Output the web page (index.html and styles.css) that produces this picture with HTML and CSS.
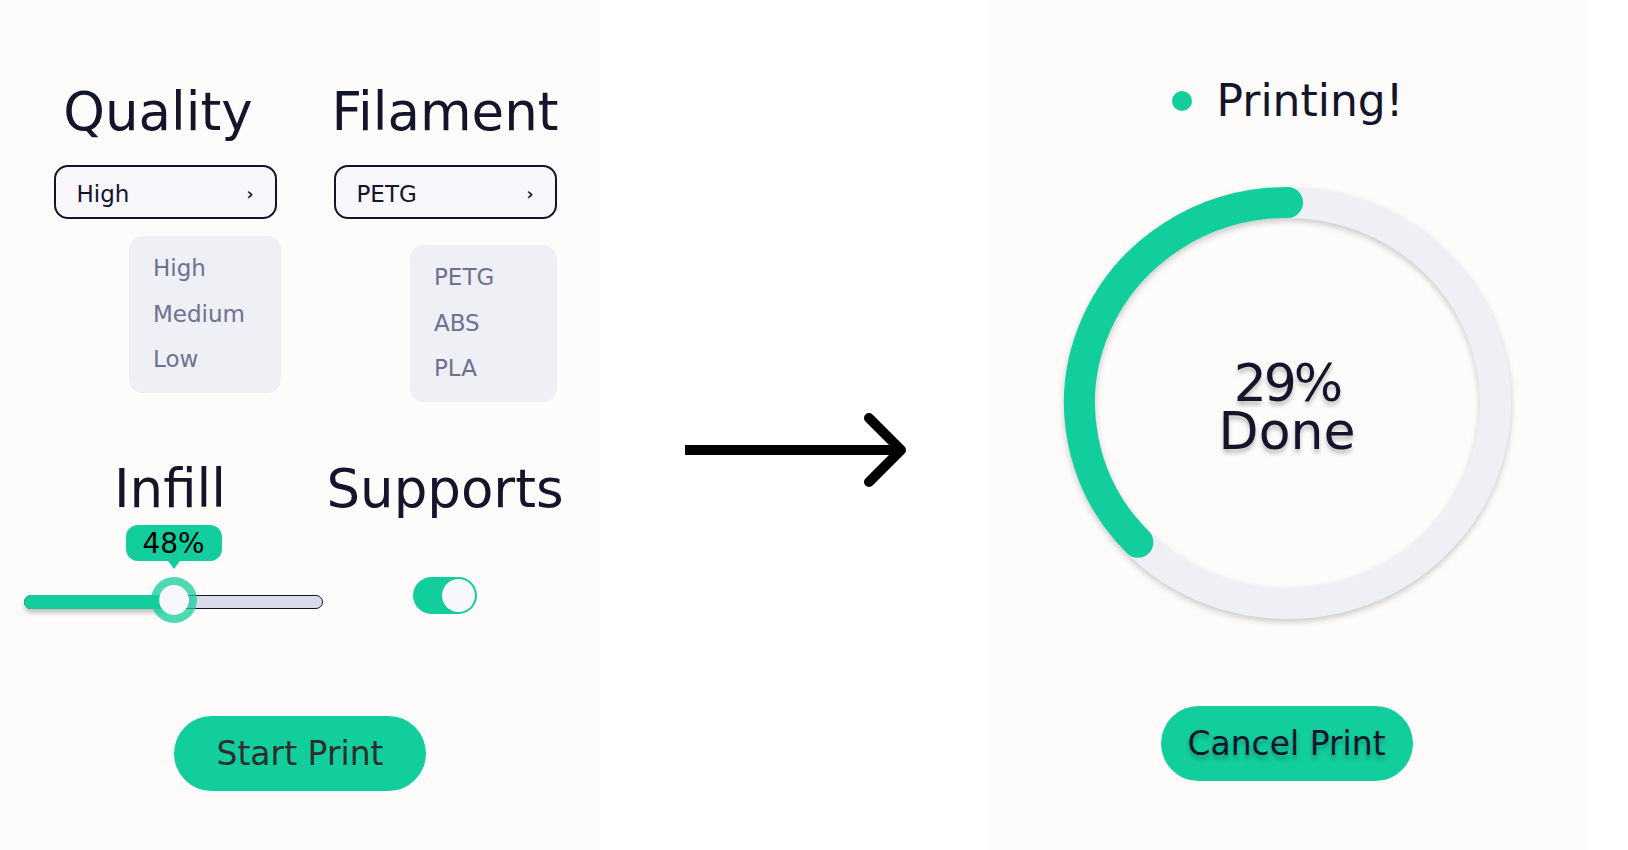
FILE: index.html
```html
<!DOCTYPE html>
<html lang="en">
<head>
<meta charset="utf-8">
<title>Print</title>
<link rel="stylesheet" href="styles.css">
</head>
<body>
<main class="page">
  <section class="panel settings">
    <div class="grid">
      <div class="field">
        <h2 class="heading heading-quality">Quality</h2>
        <div class="select"><span>High</span><span class="chev">›</span></div>
        <ul class="menu menu-quality"><li>High</li><li>Medium</li><li>Low</li></ul>
      </div>
      <div class="field">
        <h2 class="heading">Filament</h2>
        <div class="select"><span>PETG</span><span class="chev">›</span></div>
        <ul class="menu menu-filament"><li>PETG</li><li>ABS</li><li>PLA</li></ul>
      </div>
      <div class="field">
        <h2 class="heading heading-infill">Infill</h2>
        <div class="slider" style="--pos: 50%">
          <div class="tip">48%</div>
          <div class="track"><div class="fill"></div></div>
          <div class="thumb"></div>
        </div>
      </div>
      <div class="field">
        <h2 class="heading">Supports</h2>
        <div class="toggle"><span class="knob"></span></div>
      </div>
    </div>
    <button class="btn btn-start">Start Print</button>
  </section>

  <div class="divider">
    <svg class="arrow" width="226" height="80" viewBox="0 0 226 80">
      <path d="M0 40 H214" stroke="#000" stroke-width="10" fill="none"/>
      <path d="M184 8 L216 40 L184 72" stroke="#000" stroke-width="10" fill="none" stroke-linecap="round" stroke-linejoin="round"/>
    </svg>
  </div>

  <section class="panel status">
    <div class="state"><span class="dot"></span><span class="state-text">Printing!</span></div>
    <div class="ring">
      <svg class="ring-svg" width="447" height="432" viewBox="0 0 447 432">
        <ellipse cx="223.5" cy="216" rx="208" ry="200.5" fill="none" stroke="#eff0f6" stroke-width="31"/>
        <path d="M223.5 15.5 A208 200.5 0 0 0 73.9 355.3" fill="none" stroke="#12ce9c" stroke-width="31" stroke-linecap="round"/>
      </svg>
      <div class="ring-text"><span class="pct">29%</span><span class="done">Done</span></div>
    </div>
    <button class="btn btn-cancel">Cancel Print</button>
  </section>
</main>
</body>
</html>
```

FILE: styles.css
```css
* { box-sizing: border-box; }

html, body {
  margin: 0;
  padding: 0;
  background: #ffffff;
}

body {
  font-family: "DejaVu Sans", "Noto Sans", sans-serif;
  color: #14142b;
}

.page {
  display: flex;
  width: 1628px;
  height: 850px;
}

.panel {
  background: #fdfcfb;
  height: 850px;
  display: flex;
  flex-direction: column;
}

.settings {
  width: 600px;
  padding-top: 85px;
}

.grid {
  margin-left: 40px;
  display: grid;
  grid-template-columns: 250px 250px;
  column-gap: 30px;
  row-gap: 60px;
}

.field {
  display: flex;
  flex-direction: column;
  align-items: center;
}

.heading {
  margin: 0;
  font-size: 53px;
  line-height: 53px;
  font-weight: 400;
  color: #14142b;
  white-space: nowrap;
}

.heading-quality { margin-right: 14px; }
.heading-infill { margin-left: 10px; }

.select {
  margin-top: 27px;
  width: 223px;
  height: 54px;
  border: 2px solid #14142b;
  border-radius: 14px;
  background: #f7f7fc;
  display: flex;
  align-items: center;
  justify-content: space-between;
  padding: 3px 21px 0 21px;
  font-size: 23px;
  color: #14142b;
}

.chev {
  font-size: 17px;
  font-weight: 700;
}

.menu {
  list-style: none;
  margin: 0;
  padding: 10px 0 10px 24px;
  background: #eff0f6;
  border-radius: 14px;
  align-self: flex-end;
  font-size: 23px;
  line-height: 45.5px;
  color: #6e7191;
}

.menu-quality {
  width: 152px;
  margin-top: 17px;
  margin-right: 9px;
}

.menu-filament {
  width: 147px;
  margin-top: 26px;
  margin-right: 13px;
}

/* slider */
.slider {
  position: relative;
  align-self: flex-start;
  margin-left: -16px;
  margin-top: 10px;
  width: 299px;
  padding-top: 70px;
}

.tip {
  position: absolute;
  top: 0;
  left: var(--pos);
  transform: translateX(-50%);
  width: 96px;
  height: 36px;
  border-radius: 12px;
  background: #12ce9c;
  color: #000;
  font-size: 28px;
  line-height: 37px;
  text-align: center;
}

.tip::after {
  content: "";
  position: absolute;
  left: 50%;
  bottom: -8px;
  margin-left: -6px;
  border-left: 6px solid transparent;
  border-right: 6px solid transparent;
  border-top: 8px solid #12ce9c;
}

.track {
  position: relative;
  height: 14px;
  border-radius: 7px;
  background: #d9dbe9;
  border: 1px solid #14142b;
}

.fill {
  position: absolute;
  left: -1px;
  top: -1px;
  height: 14px;
  width: var(--pos);
  border-radius: 7px;
  background: #12ce9c;
  box-shadow: 0 4px 4px rgba(0, 0, 0, 0.22);
}

.thumb {
  position: absolute;
  top: 52px;
  left: var(--pos);
  transform: translateX(-50%);
  width: 46px;
  height: 46px;
  border-radius: 50%;
  background: #f7f7fc;
  border: 8px solid rgba(18, 206, 156, 0.75);
  background-clip: padding-box;
}

/* toggle */
.toggle {
  margin-top: 62px;
  width: 64px;
  height: 37px;
  border-radius: 19px;
  background: #12ce9c;
  padding: 2px;
  display: flex;
  justify-content: flex-end;
}

.knob {
  width: 33px;
  height: 33px;
  border-radius: 50%;
  background: #f7f7fc;
}

/* buttons */
.btn {
  width: 252px;
  height: 75px;
  border: none;
  border-radius: 38px;
  background: #12ce9c;
  font-family: "DejaVu Sans", "Noto Sans", sans-serif;
  font-size: 33px;
  padding: 0;
  align-self: center;
}

.btn-start {
  margin-top: 102px;
  color: #2e2e2e;
}

.btn-cancel {
  margin-top: 87px;
  color: #14142b;
  text-shadow: 0 4px 4px rgba(0, 0, 0, 0.25);
}

/* divider arrow */
.divider {
  width: 386px;
  padding-top: 410px;
  padding-left: 85px;
}

.arrow { display: block; }

/* status panel */
.status {
  width: 601px;
  padding-top: 79px;
  align-items: center;
}

.state {
  display: flex;
  align-items: center;
  gap: 25px;
  margin-left: 2px;
}

.dot {
  width: 20px;
  height: 20px;
  border-radius: 50%;
  background: #12ce9c;
}

.state-text {
  font-size: 44px;
  line-height: 44px;
  color: #14142b;
}

.ring {
  margin-top: 64px;
  display: grid;
  margin-left: 1px;
}

.ring-svg {
  grid-area: 1 / 1;
  display: block;
  overflow: visible;
  filter: drop-shadow(0 3px 3px rgba(0, 0, 0, 0.2));
}

.ring-text {
  grid-area: 1 / 1;
  place-self: center;
  margin-top: 7px;
  display: flex;
  flex-direction: column;
  align-items: center;
  font-size: 52px;
  color: #14142b;
  text-shadow: 0 4px 4px rgba(0, 0, 0, 0.25);
}

.pct {
  display: block;
  height: 48px;
  line-height: 48px;
  letter-spacing: -3px;
}

.done {
  display: block;
  height: 48px;
  line-height: 48px;
}
```
